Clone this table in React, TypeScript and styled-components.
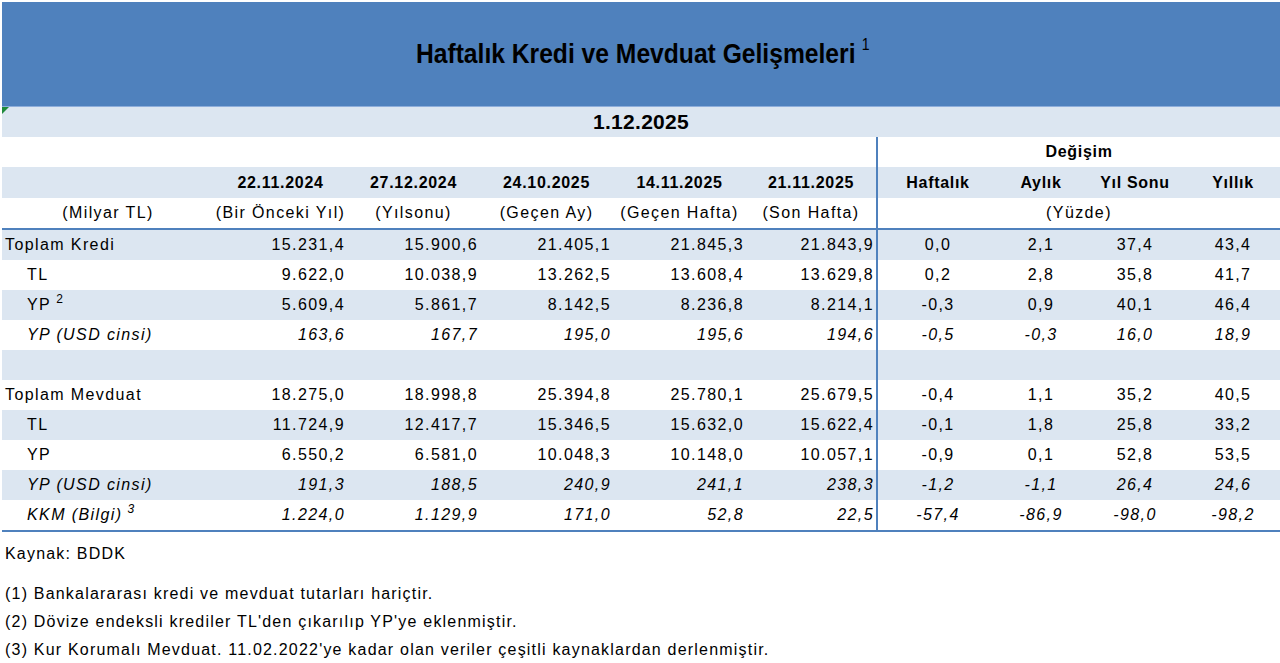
import styled, { createGlobalStyle, css } from "styled-components";

const GlobalStyle = createGlobalStyle`
    html, body {
        margin: 0;
        padding: 0;
        background: #ffffff;
    }
    body {
        font-family: "Liberation Sans", Arial, sans-serif;
        color: #000000;
    }
`;

const COLS = "212px repeat(4, 133px) 130px 122px 86px 102px 94px";

const Page = styled.div`
    width: 1278px;
    padding: 2px 0 0 2px;
`;

const Banner = styled.div`
    height: 104px;
    background-color: #4f81bd;
    border-bottom: 1px solid #8eaedb;
    display: flex;
    align-items: center;
    justify-content: center;
`;

// the sheet uses a narrow bold face; squeeze the Arial-metric one to match
const Title = styled.h1`
    margin: 0 0 0 4px;
    font-family: "Liberation Sans", Arial, sans-serif;
    font-size: 28px;
    font-weight: bold;
    color: #000000;
    transform: scaleX(0.88);

    sup {
        font-size: 16px;
        font-weight: normal;
        margin-left: 7px;
        vertical-align: 13px;
        line-height: 0;
    }
`;

const Row = styled.div<{ $shade?: boolean; $line?: boolean; $h?: number }>`
    display: grid;
    grid-template-columns: ${COLS};
    height: ${(p) => p.$h ?? 30}px;
    background-color: ${(p) => (p.$shade ? "#dce6f1" : "#ffffff")};
    ${(p) =>
        p.$line &&
        css`
            border-bottom: 2px solid #4f81bd;
        `}
`;

const DateBar = styled.div`
    position: relative;
    height: 30px;
    background-color: #dce6f1;
    display: flex;
    align-items: center;
    justify-content: center;
    font-size: 21px;
    font-weight: bold;
    letter-spacing: 0.3px;
`;

const ErrorMark = styled.span`
    position: absolute;
    top: 0;
    left: 0;
    width: 0;
    height: 0;
    border-top: 7px solid #1e8a3c;
    border-right: 7px solid transparent;
`;

const Cell = styled.div<{
    $align?: "left" | "right" | "center";
    $span?: number;
    $divider?: boolean;
    $bold?: boolean;
    $italic?: boolean;
    $indent?: boolean;
}>`
    display: flex;
    align-items: center;
    justify-content: ${(p) =>
        p.$align === "right" ? "flex-end" : p.$align === "center" ? "center" : "flex-start"};
    grid-column: span ${(p) => p.$span ?? 1};
    padding: 0 ${(p) => (p.$align === "right" ? "2px" : "0")} 0
        ${(p) => (p.$align === "left" ? (p.$indent ? "25px" : "3px") : "0")};
    font-size: 16px;
    letter-spacing: ${(p) => (p.$bold ? "0.7px" : "1.4px")};
    white-space: nowrap;
    font-weight: ${(p) => (p.$bold ? "bold" : "normal")};
    font-style: ${(p) => (p.$italic ? "italic" : "normal")};
    ${(p) =>
        p.$divider &&
        css`
            border-left: 2px solid #4f81bd;
        `}
`;

const Label = styled.span`
    sup {
        font-size: 12px;
        line-height: 0;
        margin-left: 5px;
        vertical-align: 7px;
    }
`;

const Footer = styled.div`
    padding: 8px 0 0 3px;
    font-size: 16px;
    letter-spacing: 1.2px;
`;

const Note = styled.p<{ $gap?: boolean }>`
    margin: ${(p) => (p.$gap ? "12px" : "0")} 0 0;
    line-height: 28px;
`;

type DataRow = {
    label: string;
    sup?: string;
    indent?: boolean;
    italic?: boolean;
    vals: string[];
};

const dates = ["22.11.2024", "27.12.2024", "24.10.2025", "14.11.2025", "21.11.2025"];
const notes = ["(Bir Önceki Yıl)", "(Yılsonu)", "(Geçen Ay)", "(Geçen Hafta)", "(Son Hafta)"];
const changes = ["Haftalık", "Aylık", "Yıl Sonu", "Yıllık"];

const rows: (DataRow | null)[] = [
    { label: "Toplam Kredi", vals: ["15.231,4", "15.900,6", "21.405,1", "21.845,3", "21.843,9", "0,0", "2,1", "37,4", "43,4"] },
    { label: "TL", indent: true, vals: ["9.622,0", "10.038,9", "13.262,5", "13.608,4", "13.629,8", "0,2", "2,8", "35,8", "41,7"] },
    { label: "YP", sup: "2", indent: true, vals: ["5.609,4", "5.861,7", "8.142,5", "8.236,8", "8.214,1", "-0,3", "0,9", "40,1", "46,4"] },
    { label: "YP (USD cinsi)", indent: true, italic: true, vals: ["163,6", "167,7", "195,0", "195,6", "194,6", "-0,5", "-0,3", "16,0", "18,9"] },
    null,
    { label: "Toplam Mevduat", vals: ["18.275,0", "18.998,8", "25.394,8", "25.780,1", "25.679,5", "-0,4", "1,1", "35,2", "40,5"] },
    { label: "TL", indent: true, vals: ["11.724,9", "12.417,7", "15.346,5", "15.632,0", "15.622,4", "-0,1", "1,8", "25,8", "33,2"] },
    { label: "YP", indent: true, vals: ["6.550,2", "6.581,0", "10.048,3", "10.148,0", "10.057,1", "-0,9", "0,1", "52,8", "53,5"] },
    { label: "YP (USD cinsi)", indent: true, italic: true, vals: ["191,3", "188,5", "240,9", "241,1", "238,3", "-1,2", "-1,1", "26,4", "24,6"] },
    { label: "KKM (Bilgi)", sup: "3", indent: true, italic: true, vals: ["1.224,0", "1.129,9", "171,0", "52,8", "22,5", "-57,4", "-86,9", "-98,0", "-98,2"] },
];

const App = () => {
    return (
        <Page>
            <GlobalStyle />
            <Banner>
                <Title>
                    Haftalık Kredi ve Mevduat Gelişmeleri<sup>1</sup>
                </Title>
            </Banner>

            <DateBar>
                <ErrorMark />
                1.12.2025
            </DateBar>

            <Row>
                <Cell $span={6} />
                <Cell $span={4} $align="center" $bold $divider>
                    Değişim
                </Cell>
            </Row>

            <Row $shade $h={31}>
                <Cell />
                {dates.map((d) => (
                    <Cell key={d} $align="center" $bold>
                        {d}
                    </Cell>
                ))}
                {changes.map((c, i) => (
                    <Cell key={c} $align="center" $bold $divider={i === 0}>
                        {c}
                    </Cell>
                ))}
            </Row>

            <Row $line>
                <Cell $align="center">(Milyar TL)</Cell>
                {notes.map((n) => (
                    <Cell key={n} $align="center">
                        {n}
                    </Cell>
                ))}
                <Cell $span={4} $align="center" $divider>
                    (Yüzde)
                </Cell>
            </Row>

            {rows.map((r, i) => {
                const last = i === rows.length - 1;
                if (!r) {
                    return (
                        <Row key={i} $shade>
                            <Cell $span={6} />
                            <Cell $span={4} $divider />
                        </Row>
                    );
                }
                return (
                    <Row key={i} $shade={i % 2 === 0} $line={last}>
                        <Cell $align="left" $indent={r.indent} $italic={r.italic}>
                            <Label>
                                {r.label}
                                {r.sup && <sup>{r.sup}</sup>}
                            </Label>
                        </Cell>
                        {r.vals.map((v, j) => (
                            <Cell
                                key={j}
                                $align={j < 5 ? "right" : "center"}
                                $italic={r.italic}
                                $divider={j === 5}
                            >
                                {v}
                            </Cell>
                        ))}
                    </Row>
                );
            })}

            <Footer>
                <Note>Kaynak: BDDK</Note>
                <Note $gap>(1) Bankalararası kredi ve mevduat tutarları hariçtir.</Note>
                <Note>(2) Dövize endeksli krediler TL'den çıkarılıp YP'ye eklenmiştir.</Note>
                <Note>(3) Kur Korumalı Mevduat. 11.02.2022'ye kadar olan veriler çeşitli kaynaklardan derlenmiştir.</Note>
            </Footer>
        </Page>
    );
};

export default App;
